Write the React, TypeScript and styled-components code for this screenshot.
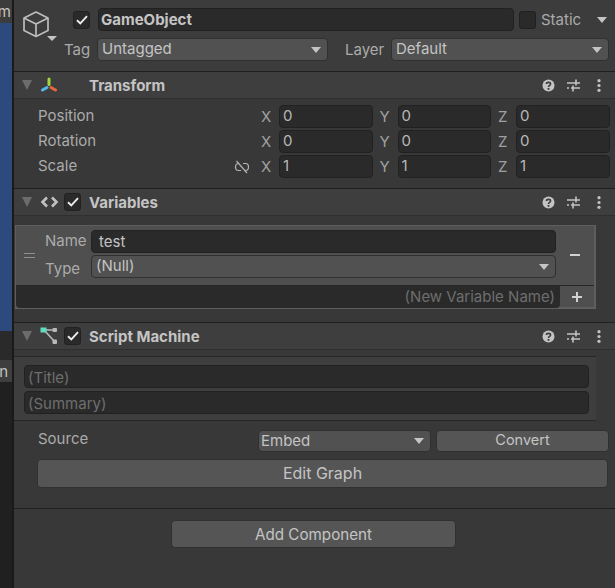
import styled, { createGlobalStyle } from 'styled-components';

const GlobalStyle = createGlobalStyle`
  html, body {
    margin: 0;
    padding: 0;
    background: #383838;
  }
  * {
    box-sizing: border-box;
  }
`

function CubeIcon() {
  return (
    <svg width="28" height="28" viewBox="0 0 28 28" fill="none" stroke="#bdbdbd" strokeWidth="1.7" strokeLinejoin="round">
      <path d="M14 2 L26 8 V20.5 L14 26.5 L2 20.5 V8 Z" />
      <path d="M2 8 L14 14 L26 8 M14 14 V26.5" />
    </svg>
  );
}

function TransformIcon() {
  return (
    <svg width="18" height="16" viewBox="0 0 18 16" fill="none" strokeWidth="3" strokeLinecap="round">
      <path d="M9 2 V7.5" stroke="#a4d63c" />
      <path d="M7 10.5 L2.5 13" stroke="#55b6e8" />
      <path d="M11 10.5 L15.5 13" stroke="#e8683a" />
    </svg>
  );
}

function CodeIcon() {
  return (
    <svg width="19" height="12" viewBox="0 0 19 12" fill="none" stroke="#c2c2c2" strokeWidth="2.6">
      <path d="M7 1.5 L2.5 6 L7 10.5" />
      <path d="M12 1.5 L16.5 6 L12 10.5" />
    </svg>
  );
}

function MachineIcon() {
  return (
    <svg width="18" height="18" viewBox="0 0 18 18" fill="none">
      <path d="M4 3 H15 M4 3 L14.5 14.5" stroke="#b8b8b8" strokeWidth="1.6" />
      <rect x="0.5" y="0.5" width="6" height="5" fill="#5fdcc0" />
      <rect x="12.5" y="1" width="4.5" height="4" rx="1" fill="#b8b8b8" />
      <rect x="12.5" y="12.5" width="4.5" height="4.5" rx="1" fill="#b8b8b8" />
    </svg>
  );
}

function HelpIcon() {
  return (
    <svg width="13" height="13" viewBox="0 0 13 13">
      <circle cx="6.5" cy="6.5" r="6" fill="#c4c4c4" />
      <path d="M4.4 5 C4.4 2.8 8.6 2.8 8.6 5 C8.6 6.4 6.5 6.3 6.5 7.9" fill="none" stroke="#3e3e3e" strokeWidth="1.6" />
      <rect x="5.6" y="9" width="1.8" height="1.8" fill="#3e3e3e" />
    </svg>
  );
}

function SlidersIcon() {
  return (
    <svg width="13" height="13" viewBox="0 0 13 13" fill="none" stroke="#c4c4c4" strokeWidth="1.3">
      <path d="M0 4 H13 M0 9 H2 M4 9 H13" />
      <path d="M9 0.5 V6.5 M6 6.5 V12.5" strokeWidth="1.6" />
    </svg>
  );
}

function DotsIcon() {
  return (
    <svg width="4" height="13" viewBox="0 0 4 13" fill="#c4c4c4">
      <circle cx="2" cy="1.7" r="1.6" />
      <circle cx="2" cy="6.5" r="1.6" />
      <circle cx="2" cy="11.3" r="1.6" />
    </svg>
  );
}

function UnlinkIcon() {
  return (
    <svg width="16" height="14" viewBox="0 0 16 14" fill="none" stroke="#b4b4b4" strokeWidth="1.2">
      <path d="M5 3.5 H4.5 C0.5 3.5 0.5 10.5 4.5 10.5 H7" />
      <path d="M9 3.5 H11.5 C15.5 3.5 15.5 10.5 11.5 10.5 H11" />
      <path d="M2.5 1 L13 13" />
    </svg>
  );
}

function CheckIcon() {
  return (
    <svg width="12" height="10" viewBox="0 0 12 10" fill="none" stroke="#ececec" strokeWidth="1.9">
      <path d="M1 5.2 L4.3 8.4 L11 1.2" />
    </svg>
  );
}

type HeaderProps = {
  title: string;
  icon: React.ReactNode;
  check?: boolean;
};

function ComponentHeader({ title, icon, check }: HeaderProps) {
  return (
    <Header>
      <Fold />
      <HeaderIcon>{icon}</HeaderIcon>
      {check && (
        <HeaderCheck>
          <CheckIcon />
        </HeaderCheck>
      )}
      <HeaderTitle>{title}</HeaderTitle>
      <HeaderTools>
        <ToolSlot><HelpIcon /></ToolSlot>
        <ToolSlot><SlidersIcon /></ToolSlot>
        <ToolSlot><DotsIcon /></ToolSlot>
      </HeaderTools>
    </Header>
  );
}

function VectorRow({ label, x, y, z, unlink }: { label: string; x: string; y: string; z: string; unlink?: boolean }) {
  return (
    <Row>
      <RowLabel>{label}</RowLabel>
      <LinkSlot>{unlink && <UnlinkIcon />}</LinkSlot>
      <AxisLabel>X</AxisLabel>
      <NumberField>{x}</NumberField>
      <AxisLabel>Y</AxisLabel>
      <NumberField>{y}</NumberField>
      <AxisLabel>Z</AxisLabel>
      <NumberField>{z}</NumberField>
    </Row>
  );
}

export default function App() {
  return (
    <Page>
      <GlobalStyle />
      <SideStrip>
        <StripTab>
          <StripText $inset={1}>m</StripText>
        </StripTab>
        <SceneView />
        <StripTabDark />
        <StripTabLight>
          <StripText $inset={4}>n</StripText>
        </StripTabLight>
        <StripRest />
      </SideStrip>
      <Inspector>
        <ObjectHeader>
          <CubeColumn>
            <CubeIcon />
            <CubeArrow />
          </CubeColumn>
          <ObjectRows>
            <NameRow>
              <Checkbox>
                <CheckIcon />
              </Checkbox>
              <NameField>GameObject</NameField>
              <Checkbox />
              <StaticLabel>Static</StaticLabel>
              <Arrow $right={8} />
            </NameRow>
            <TagRow>
              <TagLabel>Tag</TagLabel>
              <Dropdown $width={231}>
                Untagged
                <Arrow />
              </Dropdown>
              <LayerLabel>Layer</LayerLabel>
              <Dropdown $width={218}>
                Default
                <Arrow />
              </Dropdown>
            </TagRow>
          </ObjectRows>
        </ObjectHeader>

        <ComponentHeader title="Transform" icon={<TransformIcon />} />
        <TransformBody>
          <VectorRow label="Position" x="0" y="0" z="0" />
          <VectorRow label="Rotation" x="0" y="0" z="0" />
          <VectorRow label="Scale" x="1" y="1" z="1" unlink />
        </TransformBody>

        <ComponentHeader title="Variables" icon={<CodeIcon />} check />
        <VariablesBody>
          <VariableBox>
            <VariableItem>
              <Handle />
              <VariableLabels>
                <span>Name</span>
                <span>Type</span>
              </VariableLabels>
              <VariableFields>
                <TextField $indent={7}>test</TextField>
                <Dropdown>
                  (Null)
                  <Arrow />
                </Dropdown>
              </VariableFields>
              <RemoveButton>
                <Glyph />
              </RemoveButton>
            </VariableItem>
            <VariableFooter>
              <NewVariable>(New Variable Name)</NewVariable>
              <AddButton>
                <Glyph $plus />
              </AddButton>
            </VariableFooter>
          </VariableBox>
        </VariablesBody>

        <ComponentHeader title="Script Machine" icon={<MachineIcon />} check />
        <MachineBody>
          <MetaBox>
            <Placeholder $height={23}>(Title)</Placeholder>
            <Placeholder $height={23}>(Summary)</Placeholder>
          </MetaBox>
          <SourceRow>
            <SourceLabel>Source</SourceLabel>
            <EmbedDropdown $width={173} $short>
              Embed
              <Arrow />
            </EmbedDropdown>
            <ConvertButton $width={173} $height={22} $size={14.5}>Convert</ConvertButton>
          </SourceRow>
          <EditRow>
            <GrayButton $height={29} $size={16}>Edit Graph</GrayButton>
          </EditRow>
        </MachineBody>

        <AddRow>
          <AddComponentButton $width={285} $height={28} $size={15.2}>Add Component</AddComponentButton>
        </AddRow>
      </Inspector>
    </Page>
  );
}

const Page = styled.div`
  display: flex;
  width: 615px;
  height: 588px;
  overflow: hidden;
  background: #383838;
  font-family: Inter, "Liberation Sans", sans-serif;
  font-size: 15px;
  color: #ababab;
`

const SideStrip = styled.div`
  display: flex;
  flex-direction: column;
  width: 14px;
  flex: none;
  background: #232323;
  border-right: 2px solid #1a1a1a;
`

const StripTab = styled.div`
  height: 23px;
  background: #3c3c3c;
  overflow: hidden;
  display: flex;
  justify-content: flex-end;
  align-items: center;
`

const StripText = styled.span<{ $inset: number }>`
  color: #c4c4c4;
  padding-right: ${p => p.$inset}px;
`

const SceneView = styled.div`
  height: 308px;
  background: #2c4a7c;
`

const StripTabDark = styled.div`
  height: 29px;
  background: #2a2a2a;
`

const StripTabLight = styled(StripTab)`
  height: 22px;
  background: #3e3e3e;
`

const StripRest = styled.div`
  flex: 1;
  background: #202020;
`

const Inspector = styled.div`
  flex: 1;
  display: flex;
  flex-direction: column;
  min-width: 0;
`

const ObjectHeader = styled.div`
  display: flex;
  height: 72px;
  padding-top: 8px;
  background: #3c3c3c;
  border-bottom: 1px solid #1f1f1f;
`

const CubeColumn = styled.div`
  position: relative;
  width: 50px;
  padding: 2px 0 0 8px;
`

const CubeArrow = styled.div`
  position: absolute;
  left: 33px;
  top: 28px;
  border-left: 5px solid transparent;
  border-right: 5px solid transparent;
  border-top: 5px solid #c4c4c4;
`

const ObjectRows = styled.div`
  display: flex;
  flex-direction: column;
  gap: 7px;
  flex: 1;
`

const NameRow = styled.div`
  position: relative;
  display: flex;
  align-items: center;
  height: 23px;
  padding-left: 9px;
`

const Checkbox = styled.div`
  width: 17px;
  height: 18px;
  flex: none;
  display: flex;
  align-items: center;
  justify-content: center;
  background: #2a2a2a;
  border: 1px solid #212121;
  border-radius: 3px;
`

const NameField = styled.div`
  width: 416px;
  height: 23px;
  margin: 0 5px 0 8px;
  padding-left: 2px;
  line-height: 21px;
  font-weight: 700;
  color: #c4c4c4;
  background: #2a2a2a;
  border: 1px solid #212121;
  border-radius: 4px;
`

const StaticLabel = styled.div`
  margin-left: 5px;
`

const Arrow = styled.i<{ $right?: number }>`
  position: absolute;
  right: ${p => p.$right ?? 6}px;
  top: 50%;
  margin-top: -3px;
  border-left: 5px solid transparent;
  border-right: 5px solid transparent;
  border-top: 6px solid #c4c4c4;
`

const TagRow = styled.div`
  display: flex;
  align-items: center;
  height: 23px;
`

const TagLabel = styled.div`
  width: 33px;
  flex: none;
`

const LayerLabel = styled.div`
  width: 63px;
  padding-left: 17px;
  flex: none;
`

const Dropdown = styled.div<{ $width?: number; $short?: boolean }>`
  position: relative;
  flex: none;
  width: ${p => (p.$width ? `${p.$width}px` : '100%')};
  height: ${p => (p.$short ? 22 : 23)}px;
  line-height: ${p => (p.$short ? 20 : 19)}px;
  padding-left: 4px;
  color: #c4c4c4;
  background: #515151;
  border: 1px solid #303030;
  border-radius: 4px;
`

const EmbedDropdown = styled(Dropdown)`
  padding-left: 2px;
  line-height: 19px;
`

const Header = styled.div`
  display: flex;
  align-items: center;
  height: 27px;
  flex: none;
  padding-left: 8px;
  background: #3e3e3e;
  border-bottom: 1px solid #2f2f2f;
`

const Fold = styled.div`
  flex: none;
  border-left: 5px solid transparent;
  border-right: 5px solid transparent;
  border-top: 10px solid #6c6c6c;
`

const HeaderIcon = styled.div`
  width: 24px;
  margin-left: 8px;
  display: flex;
  align-items: center;
  flex: none;
`

const HeaderCheck = styled(Checkbox)`
  margin-right: 7px;
`

const HeaderTitle = styled.div`
  font-weight: 700;
  color: #c4c4c4;
  padding-left: 1px;
  &:nth-child(3) {
    margin-left: 24px;
  }
`

const HeaderTools = styled.div`
  margin-left: auto;
  display: flex;
  align-items: center;
  padding-right: 4px;
`

const ToolSlot = styled.div`
  width: 25px;
  display: flex;
  justify-content: center;
`

const TransformBody = styled.div`
  height: 90px;
  padding-top: 6px;
  display: flex;
  flex-direction: column;
  gap: 2px;
  border-bottom: 1px solid #1f1f1f;
`

const Row = styled.div`
  display: flex;
  align-items: center;
  height: 23px;
  padding-left: 24px;
`

const RowLabel = styled.div`
  width: 196px;
  flex: none;
  padding-bottom: 2px;
`

const LinkSlot = styled.div`
  width: 27px;
  flex: none;
  display: flex;
`

const AxisLabel = styled.div`
  width: 18px;
  flex: none;
  color: #a0a0a0;
`

const NumberField = styled.div`
  width: 93.5px;
  height: 23px;
  margin-right: 7px;
  padding-left: 3px;
  line-height: 20px;
  color: #b8b8b8;
  background: #2a2a2a;
  border: 1px solid #212121;
  border-radius: 4px;
  flex: none;
`

const VariablesBody = styled.div`
  height: 107px;
  padding: 9px 0 0 1px;
  border-bottom: 1px solid #1f1f1f;
`

const VariableBox = styled.div`
  width: 581px;
  height: 84px;
  background: #4f4f4f;
  border: 1px solid #5e5e5e;
  border-right-width: 2px;
  border-bottom-width: 2px;
`

const VariableItem = styled.div`
  display: flex;
  height: 60px;
  padding: 4px 0 0 8px;
  border-bottom: 1px solid #262626;
`

const Handle = styled.div`
  width: 11px;
  height: 5px;
  margin-top: 23px;
  flex: none;
  border-top: 1px solid #909090;
  border-bottom: 1px solid #909090;
`

const VariableLabels = styled.div`
  width: 56px;
  padding: 1px 0 0 10px;
  flex: none;
  display: flex;
  flex-direction: column;
  gap: 9px;
`

const VariableFields = styled.div`
  width: 465px;
  flex: none;
  display: flex;
  flex-direction: column;
  gap: 2px;
`

const TextField = styled.div<{ $indent: number }>`
  height: 23px;
  padding-left: ${p => p.$indent}px;
  line-height: 21px;
  color: #c4c4c4;
  background: #2a2a2a;
  border: 1px solid #212121;
  border-radius: 4px;
`

const RemoveButton = styled.div`
  flex: 1;
  display: flex;
  align-items: center;
  justify-content: center;
  padding: 0 0 6px 0;
`

const Glyph = styled.div<{ $plus?: boolean }>`
  position: relative;
  width: 10px;
  height: 2px;
  background: #d0d0d0;
  &::after {
    content: '';
    display: ${p => (p.$plus ? 'block' : 'none')};
    position: absolute;
    left: 4px;
    top: -4px;
    width: 2px;
    height: 10px;
    background: #d0d0d0;
  }
`

const VariableFooter = styled.div`
  display: flex;
  height: 22px;
`

const NewVariable = styled.div`
  width: 544px;
  flex: none;
  padding-right: 5px;
  line-height: 22px;
  text-align: right;
  color: #6e6e6e;
  background: #2a2a2a;
  border-radius: 0 0 4px 4px;
`

const AddButton = styled.div`
  flex: 1;
  display: flex;
  align-items: center;
  justify-content: center;
`

const MachineBody = styled.div`
  height: 159px;
  flex: none;
  padding-top: 6px;
  border-bottom: 1px solid #1f1f1f;
`

const MetaBox = styled.div`
  width: 582px;
  height: 65px;
  padding: 8px 7px 0 10px;
  display: flex;
  flex-direction: column;
  gap: 3px;
  background: #3e3e3e;
  border-top: 1px solid #262626;
  border-bottom: 1px solid #262626;
`

const Placeholder = styled.div<{ $height: number }>`
  height: ${p => p.$height}px;
  padding-left: 3px;
  line-height: 23px;
  color: #6e6e6e;
  background: #2a2a2a;
  border: 1px solid #212121;
  border-radius: 4px;
`

const SourceRow = styled.div`
  display: flex;
  align-items: center;
  gap: 5px;
  height: 22px;
  margin-top: 9px;
  padding-left: 24px;
`

const SourceLabel = styled.div`
  width: 215px;
  flex: none;
  padding-bottom: 6px;
`

const GrayButton = styled.div<{ $width?: number; $height: number; $size?: number }>`
  width: ${p => (p.$width ? `${p.$width}px` : '100%')};
  height: ${p => p.$height}px;
  flex: none;
  font-size: ${p => p.$size ?? 15}px;
  line-height: ${p => p.$height - 2}px;
  text-align: center;
  color: #c4c4c4;
  background: #555555;
  border: 1px solid #303030;
  border-radius: 4px;
`

const ConvertButton = styled(GrayButton)`
  line-height: 18px;
`

const AddComponentButton = styled(GrayButton)`
  line-height: 28px;
`

const EditRow = styled.div`
  padding: 7px 7px 0 23px;
`

const AddRow = styled.div`
  display: flex;
  padding: 11px 0 0 157px;
`
